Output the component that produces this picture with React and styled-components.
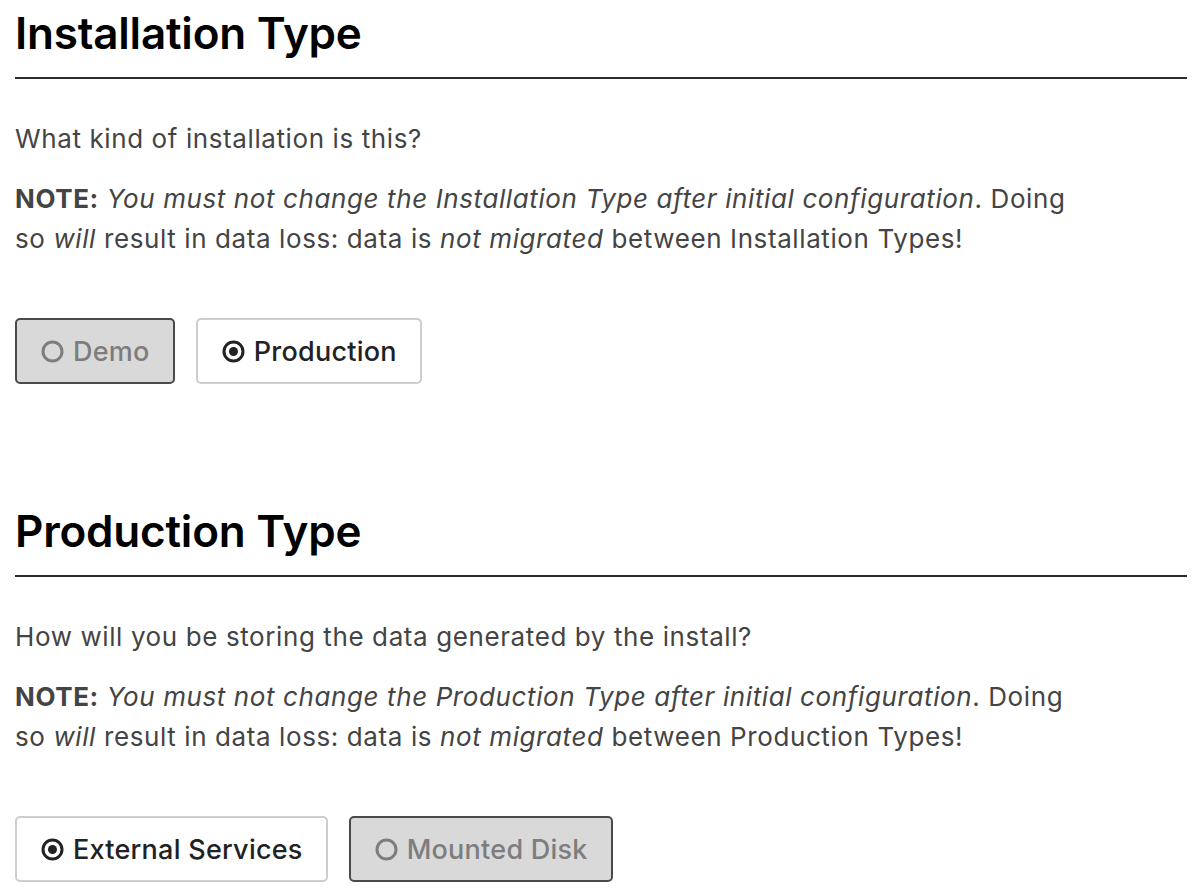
import React from 'react';
import styled, { createGlobalStyle } from 'styled-components';

const GlobalStyle = createGlobalStyle`
  body {
    margin: 0;
    background: #fff;
    font-family: Inter, "Noto Sans", "Liberation Sans", sans-serif;
  }
`;

const Page = styled.div`
  padding: 0 11px 0 15px;
`;

const Section = styled.section`
  padding-top: 6px;
  margin-bottom: 114px;

  &:last-child {
    margin-bottom: 0;
  }
`;

const Heading = styled.h1`
  margin: 0;
  padding-bottom: 16px;
  border-bottom: 2px solid #2b2b2b;
  font-size: 44px;
  line-height: 55px;
  font-weight: 600;
  color: #000;
  letter-spacing: -0.2px;
`;

const Text = styled.p`
  margin: ${(props) => props.$top || 0}px 0 0;
  max-width: 1070px;
  font-size: 26px;
  line-height: 40px;
  letter-spacing: 0.6px;
  color: #444;

  b {
    font-weight: 700;
  }
`;

const Options = styled.div`
  display: flex;
  gap: 21px;
  margin-top: 59px;
`;

const Option = styled.button`
  display: flex;
  align-items: center;
  gap: 9px;
  height: 66px;
  padding: 0 23px 0 24px;
  border-radius: 5px;
  border: 2px solid ${(props) => (props.$active ? '#cdcdcd' : '#4a4a4a')};
  background: ${(props) => (props.$active ? '#fff' : '#d9d9d9')};
  color: ${(props) => (props.$active ? '#222' : '#7d7d7d')};
  font-family: inherit;
  font-size: 27px;
  font-weight: 500;
  letter-spacing: 0.25px;
  cursor: pointer;
`;

const Radio = ({ checked }) => (
  <svg width="23" height="23" viewBox="0 0 23 23">
    <circle cx="11.5" cy="11.5" r="9.5" fill="none" stroke="currentColor" strokeWidth="3" />
    {checked && <circle cx="11.5" cy="11.5" r="4.5" fill="currentColor" />}
  </svg>
);

const Chooser = ({ options, value }) => (
  <Options>
    {options.map((opt) => (
      <Option key={opt} $active={opt === value}>
        <Radio checked={opt === value} />
        {opt}
      </Option>
    ))}
  </Options>
);

const App = () => (
  <Page>
    <GlobalStyle />
    <Section>
      <Heading>Installation Type</Heading>
      <Text $top={40}>What kind of installation is this?</Text>
      <Text $top={20}>
        <b>NOTE:</b> <i>You must not change the Installation Type after initial configuration</i>. Doing
        so <i>will</i> result in data loss: data is <i>not migrated</i> between Installation Types!
      </Text>
      <Chooser options={['Demo', 'Production']} value="Production" />
    </Section>
    <Section>
      <Heading>Production Type</Heading>
      <Text $top={40}>How will you be storing the data generated by the install?</Text>
      <Text $top={20}>
        <b>NOTE:</b> <i>You must not change the Production Type after initial configuration</i>. Doing
        so <i>will</i> result in data loss: data is <i>not migrated</i> between Production Types!
      </Text>
      <Chooser options={['External Services', 'Mounted Disk']} value="External Services" />
    </Section>
  </Page>
);

export default App;
